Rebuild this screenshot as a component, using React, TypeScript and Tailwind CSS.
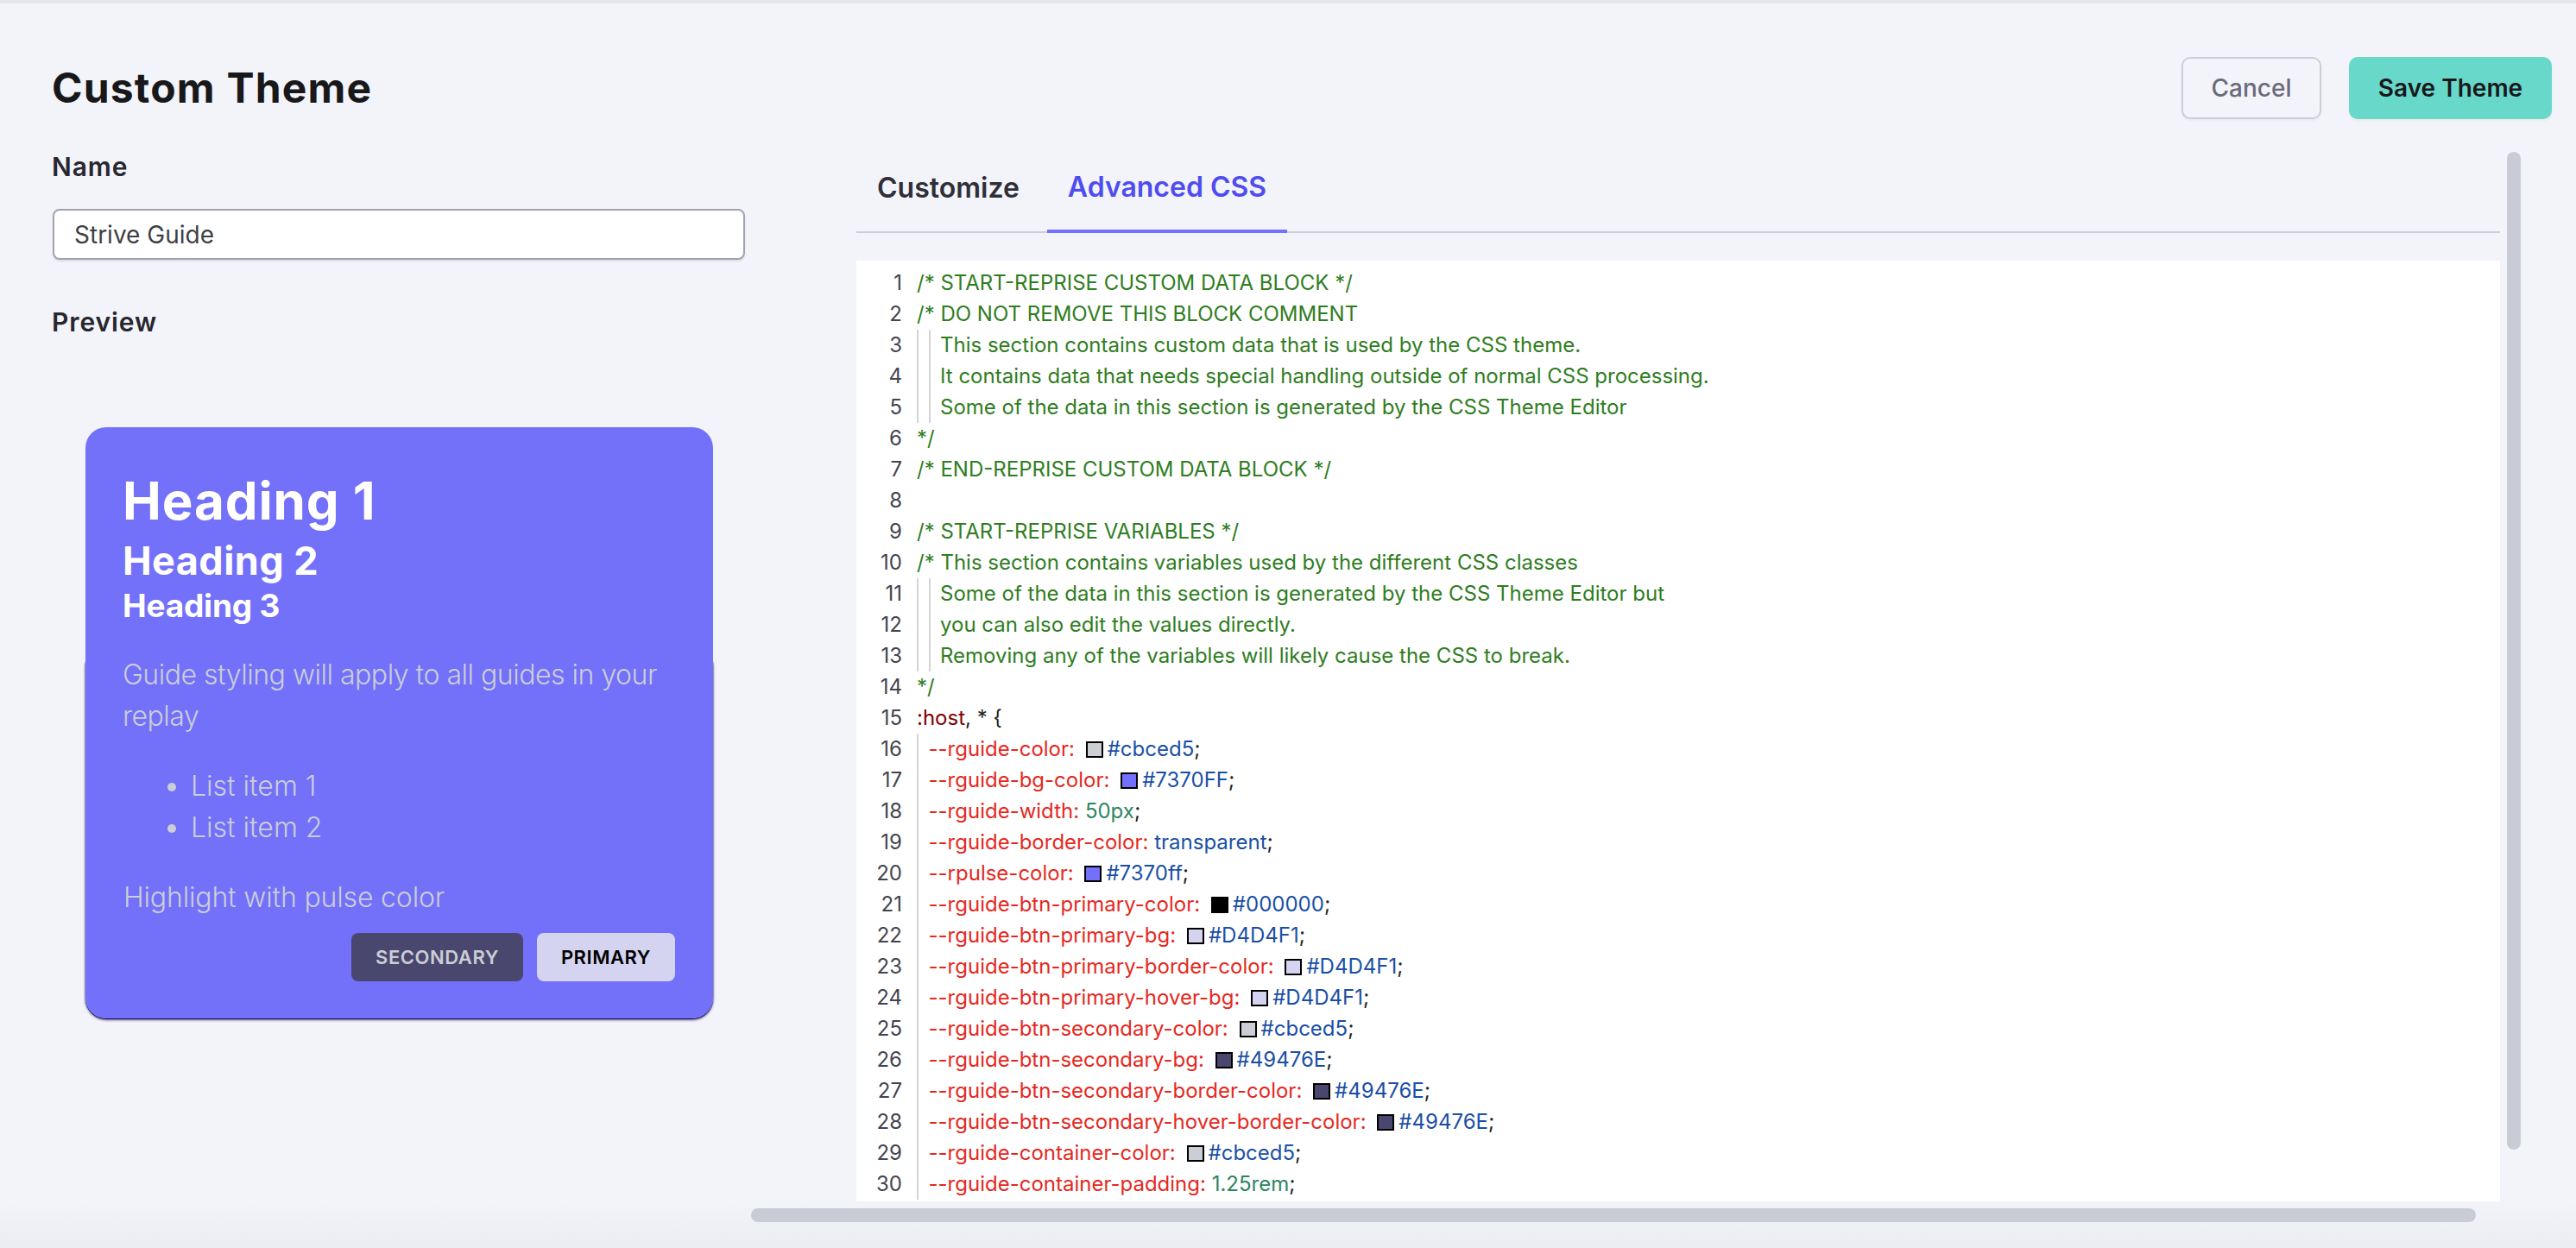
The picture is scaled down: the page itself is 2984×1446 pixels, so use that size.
import React from "react";

type Tok = { t: "c" | "s" | "p" | "h" | "n" | "k" | "x"; v: string; sw?: string };
type Line = { guides: number; toks: Tok[] };

const c = (v: string, guides = 0): Line => ({ guides, toks: [{ t: "c", v }] });
const hex = (prop: string, v: string): Line => ({
  guides: 1,
  toks: [{ t: "p", v: prop + ":" }, { t: "x", v: " " }, { t: "h", v, sw: v }, { t: "x", v: ";" }],
});
const lit = (prop: string, v: string, t: "n" | "k"): Line => ({
  guides: 1,
  toks: [{ t: "p", v: prop + ":" }, { t: "x", v: " " }, { t, v }, { t: "x", v: ";" }],
});

const lines: Line[] = [
  c("/* START-REPRISE CUSTOM DATA BLOCK */"),
  c("/* DO NOT REMOVE THIS BLOCK COMMENT"),
  c("This section contains custom data that is used by the CSS theme.", 2),
  c("It contains data that needs special handling outside of normal CSS processing.", 2),
  c("Some of the data in this section is generated by the CSS Theme Editor", 2),
  c("*/"),
  c("/* END-REPRISE CUSTOM DATA BLOCK */"),
  { guides: 0, toks: [] },
  c("/* START-REPRISE VARIABLES */"),
  c("/* This section contains variables used by the different CSS classes"),
  c("Some of the data in this section is generated by the CSS Theme Editor but", 2),
  c("you can also edit the values directly.", 2),
  c("Removing any of the variables will likely cause the CSS to break.", 2),
  c("*/"),
  { guides: 0, toks: [{ t: "s", v: ":host" }, { t: "x", v: ", * {" }] },
  hex("--rguide-color", "#cbced5"),
  hex("--rguide-bg-color", "#7370FF"),
  lit("--rguide-width", "50px", "n"),
  lit("--rguide-border-color", "transparent", "k"),
  hex("--rpulse-color", "#7370ff"),
  hex("--rguide-btn-primary-color", "#000000"),
  hex("--rguide-btn-primary-bg", "#D4D4F1"),
  hex("--rguide-btn-primary-border-color", "#D4D4F1"),
  hex("--rguide-btn-primary-hover-bg", "#D4D4F1"),
  hex("--rguide-btn-secondary-color", "#cbced5"),
  hex("--rguide-btn-secondary-bg", "#49476E"),
  hex("--rguide-btn-secondary-border-color", "#49476E"),
  hex("--rguide-btn-secondary-hover-border-color", "#49476E"),
  hex("--rguide-container-color", "#cbced5"),
  lit("--rguide-container-padding", "1.25rem", "n"),
];

const tokClass: Record<Tok["t"], string> = {
  c: "text-[#2f7d22]",
  s: "text-[#800000]",
  p: "text-[#e5281e]",
  h: "text-[#1a4fa5]",
  n: "text-[#2f8560]",
  k: "text-[#1a4fa5]",
  x: "text-[#222222]",
};

function CodeLine({ line, n }: { line: Line; n: number }) {
  const guides = [];
  for (let i = 0; i < line.guides; i++) {
    guides.push(<span key={i} className="w-[13.5px] shrink-0 self-stretch border-l-2 border-[#d4d4d4]" />);
  }
  return (
    <div className="flex h-9 items-stretch whitespace-pre">
      <span className="flex w-[53px] shrink-0 items-center justify-end text-[#444450]">{n}</span>
      <span className="ml-[17px] flex">
        {guides}
        <span className="flex items-center">
          {line.toks.map((t, i) => (
            <React.Fragment key={i}>
              {t.sw ? (
                <span
                  className="ml-[6px] mr-[5px] h-[19px] w-5 shrink-0 border-2 border-black"
                  style={{ backgroundColor: t.sw }}
                />
              ) : null}
              <span className={tokClass[t.t]}>{t.v}</span>
            </React.Fragment>
          ))}
        </span>
      </span>
    </div>
  );
}

function Preview() {
  return (
    <div className="relative ml-[38px] mt-[100px] w-[727px]">
      <div className="absolute inset-x-0 bottom-0 top-[272px] rounded-b-[24px] shadow-[0_1px_0_#1a1155,0_2px_3px_rgba(30,20,100,0.7),0_0_2px_rgba(0,0,0,0.7)]" />
      <div className="relative flex h-[685px] flex-col rounded-[24px] bg-[#7370FA] pl-[43px] pr-[44px] pt-[49px] text-[#cbced5]">
        <h1 className="text-[60px] font-bold leading-[72px] tracking-[0.015em] text-white">Heading 1</h1>
        <h2 className="mt-[7px] text-[45px] font-bold leading-[54px] tracking-[0.01em] text-white">Heading 2</h2>
        <h3 className="mt-[3px] text-[37px] font-bold leading-[44px] tracking-[-0.005em] text-white">Heading 3</h3>
        <p className="mt-[34px] text-[32px] font-light leading-[48px] tracking-[-0.015em]">
          Guide styling will apply to all guides in your replay
        </p>
        <ul className="mt-[33px] list-disc pl-[79px] text-[32px] font-light leading-[48px]">
          <li>List item 1</li>
          <li>List item 2</li>
        </ul>
        <p className="ml-px mt-[33px] text-[32px] font-light leading-[48px] tracking-[-0.005em]">
          Highlight with pulse color
        </p>
        <div className="mt-[17px] flex justify-end gap-4">
          <button className="h-14 w-[199px] rounded-lg bg-[#49476E] text-[22px] font-semibold tracking-[0.025em] text-[#cbced5]">
            SECONDARY
          </button>
          <button className="h-14 w-40 rounded-lg bg-[#D4D4F1] text-[22px] font-semibold tracking-[0.025em] text-black">
            PRIMARY
          </button>
        </div>
      </div>
    </div>
  );
}

export default function App() {
  return (
    <div className="relative flex h-[1446px] w-[2984px] flex-col overflow-hidden border-t-4 border-[#e5e7eb] bg-[linear-gradient(#f3f4f9_96%,#ecedf2)] font-['Inter',sans-serif]">
      <header className="flex items-start justify-between pl-[60px] pr-[28px] pt-[62px]">
        <h1 className="text-[48px] font-bold leading-[72px] tracking-[0.025em] text-[#18181b]">Custom Theme</h1>
        <div className="flex gap-8">
          <button className="h-[72px] w-[162px] rounded-[10px] border-2 border-[#cbced5] text-[28px] font-medium text-[#6a6a7a] shadow-[0_2px_3px_rgba(0,0,0,0.04)]">
            Cancel
          </button>
          <button className="h-[72px] w-[235px] rounded-[10px] bg-[#68D8CB] text-[28px] font-semibold text-[#18181b] shadow-[0_2px_3px_rgba(0,0,0,0.04)]">
            Save Theme
          </button>
        </div>
      </header>
      <main className="flex min-h-0 flex-1">
        <section className="w-[992px] shrink-0 pl-[60px]">
          <div className="mt-[33px] text-[30px] font-semibold leading-[44px] tracking-[0.03em] text-[#27272f]">Name</div>
          <div className="ml-px mt-[27px] flex h-[59px] w-[802px] items-center rounded-lg border-2 border-[#a2a2b0] bg-white pl-[23px] text-[28px] text-[#3f3f46] shadow-[0_2px_2px_rgba(0,0,0,0.08)]">
            Strive Guide
          </div>
          <div className="mt-[50px] text-[30px] font-semibold leading-[44px] tracking-[0.03em] text-[#27272f]">Preview</div>
          <div className="ml-px">
            <Preview />
          </div>
        </section>
        <section className="flex w-[1904px] shrink-0 flex-col">
          <div className="flex h-[132px] items-end border-b-2 border-[#cbced5]">
            <div className="flex">
              <div className="flex h-[92px] w-[221px] items-center pb-2 pl-6 text-[32px] font-semibold text-[#2f2f38]">
                Customize
              </div>
              <div className="mb-[-2px] flex h-[94px] w-[278px] items-center justify-center border-b-4 border-[#7370FF] pb-2 text-[32px] font-semibold text-[#4f4cf0]">
                Advanced CSS
              </div>
            </div>
          </div>
          <div className="mt-8 h-[1090px] overflow-hidden bg-white pt-2 text-[24px]">
            {lines.map((l, i) => (
              <CodeLine key={i} line={l} n={i + 1} />
            ))}
          </div>
        </section>
      </main>
      <div className="absolute left-[2904px] top-[172px] h-[1156px] w-4 rounded-lg bg-[#c9ccd5]" />
      <div className="absolute left-[870px] top-[1396px] h-4 w-[1998px] rounded-lg bg-[#c9ccd5]" />
    </div>
  );
}
